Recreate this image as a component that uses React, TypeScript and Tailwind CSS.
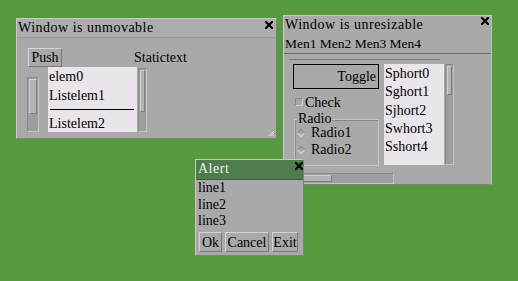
import React from "react";

function CloseX({ className = "" }: { className?: string }) {
  return (
    <svg width="8" height="8" viewBox="0 0 8 8" className={className}>
      <path d="M1 1 L7 7 M7 1 L1 7" stroke="#000" strokeWidth="2.2" strokeLinecap="square" />
    </svg>
  );
}

function VScroll({ h, w, thumbTop, thumbH }: { h: number; w: number; thumbTop: number; thumbH: number }) {
  return (
    <div
      className="relative border border-t-[#8a8a8a] border-l-[#8a8a8a] border-b-[#c4c4c4] border-r-[#c4c4c4] bg-[#9e9e9e]"
      style={{ height: h, width: w }}
    >
      <div
        className="absolute left-[1px] right-[1px] border border-t-[#d0d0d0] border-l-[#d0d0d0] border-b-[#7c7c7c] border-r-[#7c7c7c] bg-[#b4b4b4]"
        style={{ top: thumbTop, height: thumbH }}
      />
    </div>
  );
}

function RaisedButton({ children, className = "" }: { children: React.ReactNode; className?: string }) {
  return (
    <div
      className={
        "flex items-center justify-center border border-t-[#d4d4d4] border-l-[#d4d4d4] border-b-[#7a7a7a] border-r-[#7a7a7a] bg-[#a9a9a9] " +
        className
      }
    >
      {children}
    </div>
  );
}

export default function App() {
  return (
    <div className="relative w-[518px] h-[281px] overflow-hidden bg-[#559b3e] font-['Liberation_Serif',serif] text-[14px] leading-[19px] text-black">
      {/* Window 1 */}
      <div className="absolute left-[16px] top-[18px] w-[261px] h-[121px] bg-[#a9a9a9] border border-t-[#c8c8c8] border-l-[#c8c8c8] border-b-[#808080] border-r-[#808080] flex flex-col">
        <div className="relative h-[18px] bg-[#adadad] border-b border-[#999999] flex items-start pl-[1px] box-content">
          <span className="leading-[18px] tracking-[0.5px]">Window is unmovable</span>
          <CloseX className="absolute right-[3px] top-[2px]" />
        </div>
        <div className="pt-[10px] flex flex-col">
          <div className="flex h-[19px] items-center">
            <RaisedButton className="ml-[11px] w-[34px] h-[19px]">Push</RaisedButton>
            <span className="ml-[72px]">Statictext</span>
          </div>
          <div className="flex items-end ml-[10px]">
            <VScroll h={55} w={12} thumbTop={1} thumbH={35} />
            <div className="ml-[9px] w-[89px] h-[65px] bg-[#e9e5ea] overflow-hidden pl-[1px]">
              <div>elem0</div>
              <div>Listelem1</div>
              <div className="mt-[4px] mb-[4px] h-[1px] bg-black ml-[1px] mr-[3px]" />
              <div>Listelem2</div>
            </div>
            <div className="ml-[1px]">
              <VScroll h={64} w={9} thumbTop={1} thumbH={42} />
            </div>
          </div>
        </div>
        <svg width="7" height="7" viewBox="0 0 7 7" className="absolute right-[1px] bottom-[1px]">
          <path d="M6 1 L1 6 M6 3 L3 6 M6 5 L5 6" stroke="#e0e0e0" strokeWidth="1" />
        </svg>
      </div>

      {/* Window 2 */}
      <div className="absolute left-[283px] top-[15px] w-[209px] h-[170px] bg-[#a9a9a9] border border-t-[#c8c8c8] border-l-[#c8c8c8] border-b-[#808080] border-r-[#c0c0c0] flex flex-col">
        <div className="relative h-[18px] flex items-start pl-[1px]">
          <span className="leading-[18px] tracking-[0.5px]">Window is unresizable</span>
          <CloseX className="absolute right-[2px] top-[1px]" />
        </div>
        <div className="h-[19px] pl-[1px] border-b border-[#6e6e6e] box-content text-[13.5px] leading-[20px]">Men1 Men2 Men3 Men4</div>
        <div className="mt-[5px] ml-[5px] w-[151px] h-[1px] bg-[#7a7a7a]" />
        <div className="flex mt-[4px]">
          <div className="ml-[9px] w-[86px] flex flex-col">
            <div className="h-[25px] border border-black bg-[#a9a9a9] flex items-center justify-end pr-[2px]">
              Toggle
            </div>
            <div className="flex items-center mt-[5px] h-[16px]">
              <div className="ml-[2px] w-[8px] h-[8px] border border-t-[#8a8a8a] border-l-[#8a8a8a] border-b-[#d0d0d0] border-r-[#d0d0d0]" />
              <span className="ml-[2px]">Check</span>
            </div>
            <div className="relative mt-[9px] ml-[1px] w-[85px] h-[47px] border border-[#c4c4c4] shadow-[inset_1px_1px_0_#8a8a8a]">
              <span className="absolute left-[2px] top-[-10px] leading-[17px] bg-[#a9a9a9] px-[1px]">Radio</span>
              <div className="flex items-center mt-[4px] h-[17px]">
                <div className="ml-[3px] w-[6px] h-[6px] rotate-45 border border-t-[#8a8a8a] border-l-[#8a8a8a] border-b-[#d8d8d8] border-r-[#d8d8d8]" />
                <span className="ml-[7px]">Radio1</span>
              </div>
              <div className="flex items-center h-[17px]">
                <div className="ml-[3px] w-[6px] h-[6px] rotate-45 border border-t-[#8a8a8a] border-l-[#8a8a8a] border-b-[#d8d8d8] border-r-[#d8d8d8]" />
                <span className="ml-[7px]">Radio2</span>
              </div>
            </div>
          </div>
          <div className="ml-[5px] w-[60px] h-[101px] bg-[#e9e5ea] pl-[1px] pt-[1px] overflow-hidden leading-[18.3px]">
            <div>Sphort0</div>
            <div>Sghort1</div>
            <div>Sjhort2</div>
            <div>Swhort3</div>
            <div>Sshort4</div>
          </div>
          <div className="ml-[1px]">
            <VScroll h={101} w={9} thumbTop={1} thumbH={29} />
          </div>
        </div>
        <div className="relative mt-[7px] ml-[10px] w-[100px] h-[11px] border border-t-[#8a8a8a] border-l-[#8a8a8a] border-b-[#c4c4c4] border-r-[#c4c4c4] bg-[#9e9e9e]">
          <div className="absolute top-[1px] bottom-[1px] left-[1px] w-[36px] border border-t-[#d0d0d0] border-l-[#d0d0d0] border-b-[#7c7c7c] border-r-[#7c7c7c] bg-[#b4b4b4]" />
        </div>
      </div>

      {/* Alert */}
      <div className="absolute left-[195px] top-[159px] w-[109px] h-[97px] bg-[#a9a9a9] border border-t-[#c8c8c8] border-l-[#c8c8c8] border-b-[#808080] border-r-[#808080] flex flex-col">
        <div className="relative h-[20px] bg-[#4e7c4c] border-b border-[#3c5e3a] flex items-start pl-[2px] text-[#eeeeee]">
          <span className="leading-[17px] tracking-[0.5px]">Alert</span>
          <CloseX className="absolute right-[0px] top-[2px]" />
        </div>
        <div className="pl-[2px] mt-[0px] leading-[16.7px]">
          <div>line1</div>
          <div>line2</div>
          <div>line3</div>
        </div>
        <div className="flex gap-[3px] ml-[3px] mt-[2px]">
          <RaisedButton className="w-[23px] h-[20px]">Ok</RaisedButton>
          <RaisedButton className="w-[44px] h-[20px]">Cancel</RaisedButton>
          <RaisedButton className="w-[26px] h-[20px]">Exit</RaisedButton>
        </div>
      </div>
    </div>
  );
}
